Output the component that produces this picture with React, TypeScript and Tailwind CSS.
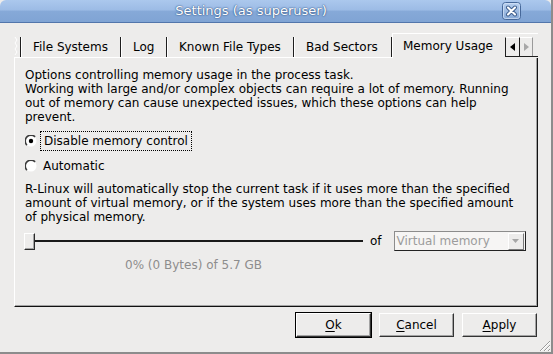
import React from 'react'

const TABS = [
  { label: 'File Systems', w: 'w-[100px]' },
  { label: 'Log', w: 'w-[46px]' },
  { label: 'Known File Types', w: 'w-[127px]' },
  { label: 'Bad Sectors', w: 'w-[98px]' },
]

/* ---------------------------------
   Small drawn bits
---------------------------------- */
const Radio = ({ checked }: { checked?: boolean }) => (
  <svg width="12" height="12" viewBox="0 0 12 12" className="shrink-0">
    <circle cx="6" cy="6" r="5.5" fill="#fff" />
    <path d="M1.9 10.1A5.2 5.2 0 0 1 10.1 1.9" fill="none" stroke="#3c3c3c" strokeWidth="1.6" />
    {checked && <circle cx="6" cy="6" r="2.2" fill="#000" />}
  </svg>
)

const CloseButton = () => (
  <svg width="19" height="18" viewBox="0 0 19 18" className="shrink-0">
    <defs>
      <linearGradient id="cb" x1="0" y1="0" x2="0" y2="1">
        <stop offset="0" stopColor="#b8d0ef" />
        <stop offset="1" stopColor="#86a8d6" />
      </linearGradient>
    </defs>
    <rect x="0.5" y="0.5" width="18" height="17" rx="3" fill="url(#cb)" stroke="#46689a" />
    <rect x="1.5" y="1.5" width="16" height="15" rx="2" fill="none" stroke="#d6e4f6" strokeOpacity="0.7" />
    <path d="M6 5.5L13 12.5M13 5.5L6 12.5" stroke="#40608f" strokeWidth="4" strokeLinecap="round" />
    <path d="M6 5.5L13 12.5M13 5.5L6 12.5" stroke="#fff" strokeWidth="2" strokeLinecap="round" />
  </svg>
)

const Grip = () => (
  <svg width="14" height="14" viewBox="0 0 14 14" className="absolute right-0 bottom-0">
    <path d="M13 3L3 13M13 7L7 13M13 11L11 13" stroke="#9a9a9a" strokeWidth="1" />
    <path d="M13 4L4 13M13 8L8 13M13 12L12 13" stroke="#fff" strokeWidth="1" />
  </svg>
)

/* ---------------------------------
   Title bar
---------------------------------- */
const TitleBar = () => (
  <div className="h-[23px] shrink-0 flex items-center rounded-t-[6px] border-b border-[#5276ab] bg-[linear-gradient(#abc8ed,#9cbbe5_46%,#86a9d8_50%,#80a4d4)]">
    <div className="w-[502px] text-center text-[13px] leading-[16px] text-white [text-shadow:0_0_2px_#2d5082,0_0_1px_#2d5082]">
      Settings (as superuser)
    </div>
    <CloseButton />
  </div>
)

/* ---------------------------------
   Tabs
---------------------------------- */
const TabStrip = () => (
  <div className="relative h-[24px] shrink-0 flex items-end">
    <div className="w-[7px] h-[20px] border-r border-[#1e1e1e]">
      <svg width="6" height="20" viewBox="0 0 6 20">
        <path d="M1 0L3 3L1 6L3 9L1 12L3 15L1 18" fill="none" stroke="#fff" strokeWidth="1" />
      </svg>
    </div>
    {TABS.map(t => (
      <div
        key={t.label}
        className={`${t.w} h-[20px] flex items-center pl-[11px] border-l border-r border-l-white border-r-[#1e1e1e] whitespace-nowrap`}
      >
        {t.label}
      </div>
    ))}
    <div className="relative z-10 -mb-px h-[25px] flex-1 flex items-start pt-[5px] pl-[10px] border-l border-t border-white bg-[#edeceb] whitespace-nowrap">
      Memory Usage
    </div>
    <div className="absolute z-20 right-0 top-[4px] w-[33px] h-[20px] flex border-b border-[#1e1e1e] bg-[#edeceb]">
      <div className="w-[15px] h-[19px] flex items-center justify-center border-l border-r border-[#1e1e1e] border-t border-t-white">
        <svg width="5" height="8" viewBox="0 0 5 8"><path d="M5 0V8L0 4Z" fill="#000" /></svg>
      </div>
      <div className="w-[13px] h-[19px] flex items-center justify-center border-r border-[#9a9a9a] border-t border-t-white">
        <svg width="5" height="8" viewBox="0 0 5 8"><path d="M0 0V8L5 4Z" fill="#a8a8a8" /></svg>
      </div>
    </div>
  </div>
)

/* ---------------------------------
   Memory usage page
---------------------------------- */
const Panel = () => (
  <div className="h-[250px] shrink-0 border border-l-white border-t-white border-r-[#111] border-b-[#111] shadow-[inset_-1px_-1px_0_#a3a3a3] pl-[10px] pr-[10px] pt-[10px]">
    <div className="whitespace-nowrap">
      <div>Options controlling memory usage in the process task.</div>
      <div>Working with large and/or complex objects can require a lot of memory. Running</div>
      <div>out of memory can cause unexpected issues, which these options can help</div>
      <div>prevent.</div>
    </div>

    <div className="mt-[7px] h-[20px] flex items-center">
      <Radio checked />
      <span className="ml-[3px] h-[20px] flex items-center px-[3px] border border-dotted border-black">
        Disable memory control
      </span>
    </div>
    <div className="mt-[5px] h-[20px] flex items-center">
      <Radio />
      <span className="ml-[6px]">Automatic</span>
    </div>

    <div className="mt-[6px] whitespace-nowrap">
      <div>R-Linux will automatically stop the current task if it uses more than the specified</div>
      <div>amount of virtual memory, or if the system uses more than the specified amount</div>
      <div>of physical memory.</div>
    </div>

    <div className="mt-[7px] h-[20px] flex items-center">
      <div className="-ml-px w-[339px] flex items-center">
        <div className="w-[11px] h-[17px] bg-[#edeceb] border border-l-white border-t-white border-r-[#2a2a2a] border-b-[#2a2a2a] shadow-[inset_-1px_-1px_0_#a3a3a3]" />
        <div className="flex-1 h-[2px] bg-[#1a1a1a]" />
      </div>
      <span className="ml-[7px]">of</span>
      <div className="ml-[12px] w-[132px] h-[20px] flex items-center border border-l-[#8c8c8c] border-t-[#8c8c8c] border-r-[#222] border-b-[#222] bg-[#f6f5f4]">
        <span className="flex-1 pl-[2px] text-[#9c9c9c] whitespace-nowrap">Virtual memory</span>
        <div className="w-[16px] h-[17px] mr-px flex items-center justify-center bg-[#edeceb] border border-l-white border-t-white border-r-[#7a7a7a] border-b-[#7a7a7a]">
          <svg width="7" height="4" viewBox="0 0 7 4"><path d="M0 0H7L3.5 4Z" fill="#a6a6a6" /></svg>
        </div>
      </div>
    </div>

    <div className="mt-[7px] -ml-px w-[339px] text-center text-[#8d8d8d]">0% (0 Bytes) of 5.7 GB</div>
  </div>
)

const DialogButton = ({ mnemonic, rest, isDefault }: { mnemonic: string; rest: string; isDefault?: boolean }) => (
  <button
    type="button"
    className={
      isDefault
        ? 'w-[75px] h-[24px] flex items-center justify-center bg-[#edeceb] border border-l-white border-t-white border-r-[#333] border-b-[#333] shadow-[inset_-1px_-1px_0_#a3a3a3] outline outline-1 outline-black'
        : 'w-[75px] h-[24px] flex items-center justify-center bg-[#edeceb] border border-l-white border-t-white border-r-[#333] border-b-[#333] shadow-[inset_-1px_-1px_0_#a3a3a3]'
    }
  >
    <span>
      <span className="underline underline-offset-[2px]">{mnemonic}</span>
      {rest}
    </span>
  </button>
)

export default function App() {
  return (
    <div className="relative w-[553px] h-[354px] overflow-hidden flex flex-col bg-[#edeceb] border-r-2 border-b-2 border-[#8c8c8c] font-['DejaVu_Sans',sans-serif] text-[12px] leading-[14px] text-black">
      <TitleBar />
      <div className="flex-1 flex flex-col pt-[10px] pl-[14px] pr-[13px]">
        <TabStrip />
        <Panel />
        <div className="mt-[6px] pr-px flex justify-end gap-[8px]">
          <DialogButton mnemonic="O" rest="k" isDefault />
          <DialogButton mnemonic="C" rest="ancel" />
          <DialogButton mnemonic="A" rest="pply" />
        </div>
      </div>
      <Grip />
    </div>
  )
}
